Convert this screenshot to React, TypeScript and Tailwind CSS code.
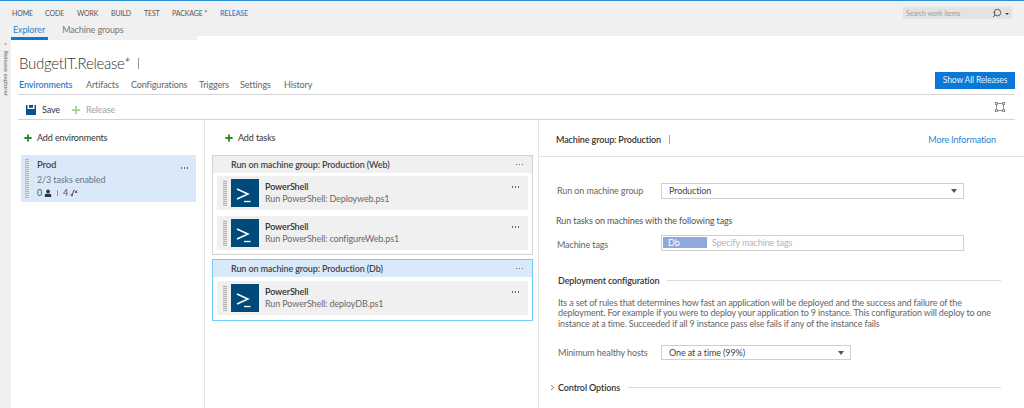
import React from "react";
import { Plus, ChevronRight, Search } from "lucide-react";

function Dots({ cls = "" }: { cls?: string }) {
  return (
    <div className={"flex gap-[1.5px] " + cls}>
      <span className="w-[1.5px] h-[1.5px] bg-[#666]" />
      <span className="w-[1.5px] h-[1.5px] bg-[#666]" />
      <span className="w-[1.5px] h-[1.5px] bg-[#666]" />
    </div>
  );
}

function Grip({ h }: { h: string }) {
  return <div className={"w-[4px] shrink-0 bg-[repeating-linear-gradient(0deg,#b5b5b5_0,#b5b5b5_1px,#e2e2e2_1px,#e2e2e2_2px)] " + h} />;
}

function Caret() {
  return <div className="w-0 h-0 border-x-[3.5px] border-x-transparent border-t-[4px] border-t-[#555]" />;
}

function PsIcon() {
  return (
    <div className="w-[28px] h-[28px] bg-[#00497b] shrink-0">
      <svg viewBox="0 0 28 28" className="w-full h-full" fill="none" stroke="#fff">
        <path d="M6 10 L17 15 L6 20" strokeWidth="1.5" />
        <path d="M13 22.5 H19.5" strokeWidth="1.3" />
      </svg>
    </div>
  );
}

function Task({ sub }: { sub: string }) {
  return (
    <div className="h-[34px] mx-[4px] bg-[#f0f0f0] flex items-center pl-[6px]">
      <Grip h="h-[26px]" />
      <div className="ml-[4px]"><PsIcon /></div>
      <div className="ml-[6px] flex-1 min-w-0 mb-[1px]">
        <div className="text-[9px] leading-[11px] font-semibold text-[#333]">PowerShell</div>
        <div className="text-[9px] leading-[11px] mt-[1px] text-[#6a6a6a]">{sub}</div>
      </div>
      <Dots cls="self-start mt-[10px] mr-[9px]" />
    </div>
  );
}

function SectionLine({ title, chevron }: { title: string; chevron?: boolean }) {
  return (
    <div className="flex items-center">
      {chevron && <ChevronRight size={9} strokeWidth={2} className="text-[#444] ml-[-9px] shrink-0" />}
      <span className="text-[9px] font-semibold text-[#333] whitespace-nowrap ml-[1px]">{title}</span>
      <div className="flex-1 h-px bg-[#dcdcdc] ml-[8px]" />
    </div>
  );
}

export default function App() {
  const nav = [
    ["HOME", "w-[33px]"], ["CODE", "w-[32px]"], ["WORK", "w-[34px]"], ["BUILD", "w-[33px]"],
    ["TEST", "w-[28px]"], ["PACKAGE *", "w-[48px]"],
  ];
  const tabs = [
    ["Artifacts", "w-[45px]"], ["Configurations", "w-[68px]"], ["Triggers", "w-[41px]"],
    ["Settings", "w-[44px]"], ["History", "w-[40px]"],
  ];
  return (
    <div className="w-[1024px] h-[408px] overflow-hidden bg-white flex flex-col font-['Lato',sans-serif] text-[#333] tracking-[-0.12px]">
      {/* top header */}
      <div className="h-[36px] bg-[#f0f0f0] border-t border-t-[#2a8dd8] shrink-0 flex flex-col">
        <div className="h-[23px] flex items-center pl-[12px] pr-[12px] pt-[1px]">
          {nav.map(([t, w]) => (
            <span key={t} className={"text-[7px] text-[#555] whitespace-nowrap " + w}>{t}</span>
          ))}
          <span className="text-[7px] font-semibold text-[#2a86d0]">RELEASE</span>
          <div className="ml-auto w-[109px] h-[12px] bg-[#e3e3e3] flex items-center pl-[3px] pr-[3px]">
            <span className="text-[7px] text-[#a0a0a0]">Search work items</span>
            <Search size={10} className="ml-auto text-[#444] -scale-x-100" />
            <div className="ml-[3px] mt-[2px] w-0 h-0 border-x-[2px] border-x-transparent border-t-[2px] border-t-[#444]" />
          </div>
        </div>
        <div className="flex items-center pl-[13px] h-[12px] text-[9px]">
          <span className="text-[#2a86d0]">Explorer</span>
          <span className="ml-[17px] text-[#777]">Machine groups</span>
        </div>
      </div>

      <div className="flex-1 flex min-h-0">
        {/* collapsed explorer strip */}
        <div className="w-[11px] bg-[#f0f0f0] shrink-0 flex flex-col items-center pt-[7px]">
          <span className="text-[5px] text-[#666] leading-none">^</span>
          <span className="[writing-mode:vertical-rl] text-[6.5px] text-[#666] leading-none mt-[3px] whitespace-nowrap">Release explorer</span>
        </div>

        <div className="flex-1 flex flex-col min-w-0">
          <div className="h-[4px] w-[186px] bg-[#f0f0f0] shrink-0">
            <div className="w-[37px] h-[3px] mt-[1px] bg-[#0a78d4]" />
          </div>

          {/* title */}
          <div className="h-[35px] pl-[8px] pr-[9px] flex items-end shrink-0">
            <span className="text-[15px] leading-[24px] font-light text-[#333] tracking-[-0.3px]">BudgetIT.Release*</span>
            <div className="w-px h-[11px] bg-[#999] ml-[8px] mb-[6px]" />
          </div>

          {/* tabs */}
          <div className="h-[20px] ml-[7px] mr-[9px] border-b border-b-[#d4d4d4] flex items-center shrink-0 relative">
            <span className="text-[9px] font-semibold text-[#1f7fcb] ml-[1px] w-[67px] mt-[1px]">Environments</span>
            {tabs.map(([t, w]) => (
              <span key={t} className={"text-[9px] text-[#666] mt-[1px] " + w}>{t}</span>
            ))}
            <div className="absolute right-0 bottom-[5px] w-[80px] h-[17px] bg-[#0a78d4] text-[#e8f3fc] text-[8.5px] flex items-center justify-center">Show All Releases</div>
          </div>

          {/* toolbar */}
          <div className="h-[25px] ml-[7px] mr-[9px] border-b border-b-[#d4d4d4] flex items-center shrink-0 pt-[6px]">
            <svg viewBox="0 0 10 10" className="ml-[8px] w-[10px] h-[10px]" fill="#0b4f96">
              <path d="M0 0 H1.5 V4 H8.5 V0 H10 V10 H0 Z" />
              <rect x="3" y="0" width="4" height="2.8" />
            </svg>
            <span className="text-[9px] ml-[6px] text-[#333]">Save</span>
            <Plus size={12} strokeWidth={3.5} className="ml-[10px] text-[#a5d193]" />
            <span className="text-[9px] ml-[4px] text-[#a5a5a5]">Release</span>
            <svg viewBox="0 0 10 10" className="ml-auto mr-[10px] mb-[6px] w-[10px] h-[10px]" fill="none" stroke="#777" strokeWidth="0.8">
              <rect x="1.5" y="1.5" width="7" height="7" />
              <rect x="0.4" y="0.4" width="2" height="2" fill="#fff" />
              <rect x="7.6" y="0.4" width="2" height="2" fill="#fff" />
              <rect x="0.4" y="7.6" width="2" height="2" fill="#fff" />
              <rect x="7.6" y="7.6" width="2" height="2" fill="#fff" />
            </svg>
          </div>

          {/* panels */}
          <div className="flex-1 flex min-h-0">
            {/* environments */}
            <div className="w-[194px] border-r border-r-[#e4e4e4] shrink-0 pl-[10px]">
              <div className="h-[35px] flex items-center pl-[2px] pt-[1px] text-[9px] text-[#333]">
                <Plus size={10} strokeWidth={4.5} className="text-[#2a8a2a]" />
                <span className="ml-[4px]">Add environments</span>
              </div>
              <div className="w-[175px] h-[47px] bg-[#dae9f9] flex pl-[4px] pt-[4px]">
                <Grip h="h-[39px]" />
                <div className="ml-[8px] flex-1">
                  <div className="text-[9.5px] leading-[12px] font-semibold text-[#444]">Prod</div>
                  <div className="text-[9px] leading-[12px] mt-[3px] text-[#6d7680]">2/3 tasks enabled</div>
                  <div className="text-[9px] leading-[12px] mt-[1px] flex items-center text-[#555]">
                    <span>0</span>
                    <svg viewBox="0 0 10 10" className="w-[8px] h-[8px] ml-[2px]" fill="#333"><circle cx="5" cy="3" r="2.3" /><path d="M1 10 V7.5 Q1 6 3 6 H7 Q9 6 9 7.5 V10 Z" /></svg>
                    <div className="w-px h-[6px] bg-[#999] mx-[5px]" />
                    <span>4</span>
                    <svg viewBox="0 0 10 10" className="w-[8px] h-[8px] ml-[2px]" fill="none" stroke="#444" strokeWidth="1.2"><path d="M1 6 L2.5 9 L4.5 2 H6 M6.5 2 L9 5 M9 2 L6.5 5" /></svg>
                  </div>
                </div>
                <Dots cls="mt-[8px] mr-[8px]" />
              </div>
            </div>

            {/* tasks */}
            <div className="w-[334px] border-r border-r-[#e4e4e4] shrink-0 pl-[7px] pr-[5px]">
              <div className="h-[35px] flex items-center pl-[12px] pt-[1px] text-[9px] text-[#333]">
                <Plus size={10} strokeWidth={4.5} className="text-[#2a8a2a]" />
                <span className="ml-[4px]">Add tasks</span>
              </div>
              <div className="h-[100px] border border-[#d2d2d2]">
                <div className="h-[17px] bg-[#f0f0f0] flex items-center pl-[18px] pr-[9px]">
                  <span className="text-[9px] font-semibold text-[#444]">Run on machine group: Production (Web)</span>
                  <Dots cls="ml-auto" />
                </div>
                <div className="mt-[3px]"><Task sub="Run PowerShell: Deployweb.ps1" /></div>
                <div className="mt-[6px]"><Task sub="Run PowerShell: configureWeb.ps1" /></div>
              </div>
              <div className="h-[62px] mt-[4px] border border-[#6fcdfa]">
                <div className="h-[17px] bg-[#dae9f9] flex items-center pl-[18px] pr-[9px]">
                  <span className="text-[9px] font-semibold text-[#444]">Run on machine group: Production (Db)</span>
                  <Dots cls="ml-auto" />
                </div>
                <div className="mt-[4px]"><Task sub="Run PowerShell: deployDB.ps1" /></div>
              </div>
            </div>

            {/* details */}
            <div className="flex-1 min-w-0 flex flex-col">
              <div className="h-[37px] border-b border-b-[#e4e4e4] flex items-center pl-[17px] pr-[28px] pt-[3px] shrink-0">
                <span className="text-[9px] font-semibold text-[#333]">Machine group: Production</span>
                <div className="w-px h-[9px] bg-[#aaa] ml-[8px]" />
                <span className="ml-auto text-[9px] text-[#1f86d6]">More Information</span>
              </div>
              <div className="pl-[18px] pr-[15px] pt-[26px]">
                <div className="flex items-center h-[15px]">
                  <span className="w-[104px] text-[9px] text-[#666] mt-[1px]">Run on machine group</span>
                  <div className="w-[303px] h-[16px] border border-[#cfcfcf] flex items-center pl-[7px] pr-[6px]">
                    <span className="text-[9px] text-[#444] mt-[1px]">Production</span>
                    <div className="ml-auto"><Caret /></div>
                  </div>
                </div>
                <div className="text-[9px] leading-[13px] text-[#555] mt-[16px] -ml-[1px]">Run tasks on machines with the following tags</div>
                <div className="flex items-center h-[15px] mt-[8px]">
                  <span className="w-[104px] text-[9px] text-[#666] mt-[4px]">Machine tags</span>
                  <div className="w-[303px] h-[16px] border border-[#cfcfcf] flex items-center pl-[1px]">
                    <span className="w-[44px] h-[11px] bg-[#8fa9dd] text-white text-[9px] leading-[12px] pl-[5px]">Db</span>
                    <span className="ml-[5px] text-[9px] text-[#b4b4b4] mt-[1px]">Specify machine tags</span>
                  </div>
                </div>
                <div className="mt-[24px] pr-[8px]"><SectionLine title="Deployment configuration" /></div>
                <div className="mt-[10px] text-[9px] leading-[10.5px] text-[#666] ml-[1px] whitespace-nowrap tracking-[-0.15px]">
                  Its a set of rules that determines how fast an application will be deployed and the success and failure of the<br />
                  deployment. For example if you were to deploy your application to 9 instance. This configuration will deploy to one<br />
                  instance at a time. Succeeded if all 9 instance pass else fails if any of the instance fails
                </div>
                <div className="flex items-center h-[15px] mt-[16px] ml-[1px]">
                  <span className="w-[103px] text-[9px] text-[#666] whitespace-nowrap mt-[1px]">Minimum healthy hosts</span>
                  <div className="w-[190px] h-[15px] border border-[#cfcfcf] flex items-center pl-[7px] pr-[6px]">
                    <span className="text-[9px] text-[#444]">One at a time (99%)</span>
                    <div className="ml-auto"><Caret /></div>
                  </div>
                </div>
                <div className="mt-[21px] pr-[8px]"><SectionLine title="Control Options" chevron /></div>
              </div>
            </div>
          </div>
        </div>
      </div>
    </div>
  );
}
